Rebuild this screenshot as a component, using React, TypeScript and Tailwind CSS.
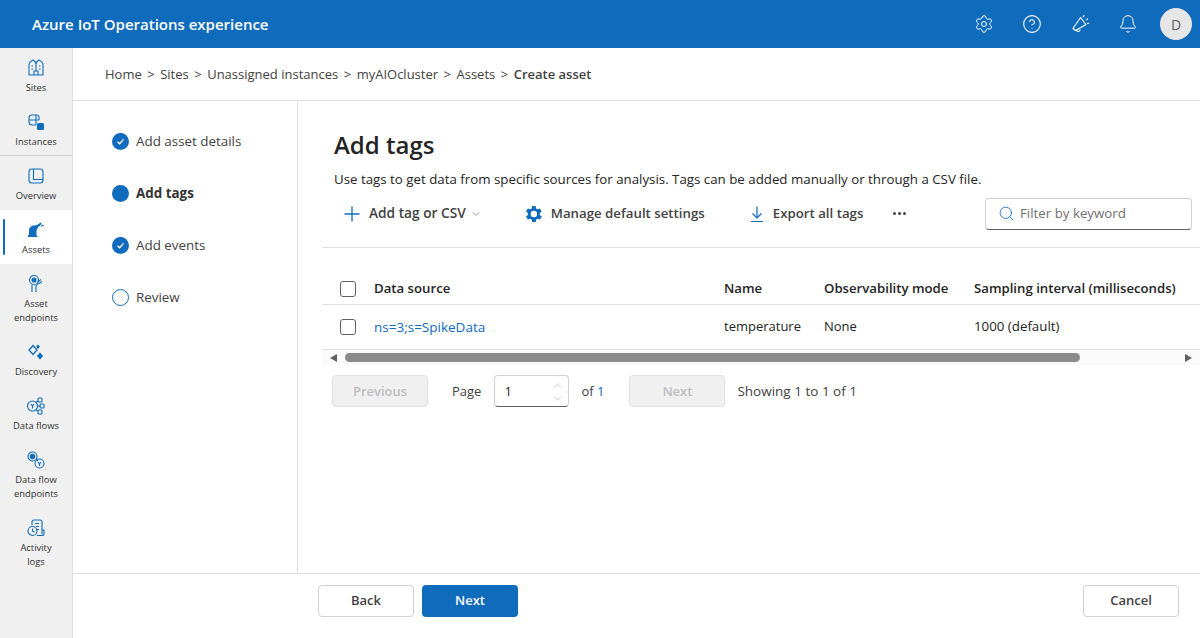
import { Bell, ChevronDown, ChevronUp, CircleHelp, Search, Settings } from "lucide-react";
import type { ReactNode } from "react";

const BLUE = "#0f6cbd";

const Ico = ({ children }: { children: ReactNode }) => (
  <svg width="20" height="20" viewBox="0 0 20 20" fill="none" stroke={BLUE} strokeWidth="1.1">
    {children}
  </svg>
);

const navItems: { label: string[]; icon: ReactNode; active?: boolean; divider?: boolean }[] = [
  {
    label: ["Sites"],
    icon: (
      <Ico>
        <path d="M3 17V7c0-2.500 3-4.500 4-5 1 .5 3 2.500 3 4.500 0-2 2-4 3-4.500 1 .5 4 2.500 4 5v10z" />
        <path d="M10 6.500V13M8 17v-4h4v4M5.500 8h1.500M5.500 11h1.500M13 8h1.500M13 11h1.500" />
      </Ico>
    ),
  },
  {
    label: ["Instances"],
    divider: true,
    icon: (
      <Ico>
        <path d="M10 3H6a3 3 0 0 0-3 3v4a3 3 0 0 0 3 3h4" />
        <path d="M10 3h1a2 2 0 0 1 2 2v3M3 8h10M10 3v10" />
        <rect x="11" y="11" width="7" height="7" rx="1.5" fill={BLUE} stroke="none" />
      </Ico>
    ),
  },
  {
    label: ["Overview"],
    icon: (
      <Ico>
        <rect x="3" y="3" width="14" height="14" rx="3" />
        <path d="M7.500 3v10.500H17" />
      </Ico>
    ),
  },
  {
    label: ["Assets"],
    active: true,
    icon: (
      <svg width="20" height="20" viewBox="0 0 20 20" fill={BLUE}>
        <path d="M2 17v-1.500l1-1V10.500C3 7.500 5.500 5.500 8 5.500c2.500 0 4.500-1.200 6.500-3l1.200 1.200c-2.200 2.400-4.700 4-5.200 6.800v5l1.500 1.200V17z" />
        <path d="M15 5.800l1.300-1.200 1.700 1.100-.6.900-1.100-.6-.8.900z" />
      </svg>
    ),
  },
  {
    label: ["Asset", "endpoints"],
    icon: (
      <Ico>
        <circle cx="8" cy="6" r="4.500" />
        <circle cx="8" cy="6" r="2" fill={BLUE} />
        <path d="M6 10.500V18M10 18v-5.500c0-1.500 1.500-2.500 3-3l3-2M11 8.500l4-3" />
      </Ico>
    ),
  },
  {
    label: ["Discovery"],
    icon: (
      <svg width="20" height="20" viewBox="0 0 20 20" fill="none" stroke={BLUE} strokeWidth="1.300">
        <path d="M7 3.500 11 8 7 12.500 3 8z" />
        <path d="M14 11.500l2.200 2.500-2.200 2.500-2.200-2.500z" fill={BLUE} />
        <path d="M12 3.500l1 1.200-1 1.200-1-1.200z" fill={BLUE} />
      </svg>
    ),
  },
  {
    label: ["Data flows"],
    icon: (
      <Ico>
        <circle cx="6.500" cy="10" r="5" />
        <path d="M5 8l1.500 2 1.500-2M6.500 10v2.500M11.500 10h3M10 6.500l2-1.500M10 13.500l2 1.500" />
        <rect x="12" y="2" width="4" height="4" rx="1" />
        <rect x="14" y="8" width="4" height="4" rx="1" />
        <rect x="12" y="14" width="4" height="4" rx="1" />
      </Ico>
    ),
  },
  {
    label: ["Data flow", "endpoints"],
    icon: (
      <Ico>
        <circle cx="6.500" cy="6.500" r="4.500" />
        <circle cx="6.500" cy="6.500" r="2.200" fill={BLUE} />
        <path d="M10 9l2 2" />
        <circle cx="13.500" cy="13.500" r="4.500" />
        <path d="M12 12l1.500 1.800 1.500-1.800M13.500 13.800V16" />
      </Ico>
    ),
  },
  {
    label: ["Activity", "logs"],
    icon: (
      <Ico>
        <path d="M6 7V4a2 2 0 0 1 2-2h6a2 2 0 0 1 2 2v12" />
        <path d="M9 5.500h4M10 8.500h3M10 11.500h3" />
        <path d="M16 12h2v3.500a2 2 0 0 1-2 2h-5" />
        <circle cx="6.500" cy="13" r="4.500" />
        <path d="M6.500 10.500V13l1.800 1.200" />
      </Ico>
    ),
  },
];

const Check = () => (
  <span className="flex h-[17px] w-[17px] items-center justify-center rounded-full bg-[#0f6cbd]">
    <svg width="9" height="9" viewBox="0 0 9 9" fill="none" stroke="white" strokeWidth="1.300">
      <path d="M1.500 4.800 3.600 6.800 7.600 2.400" />
    </svg>
  </span>
);

const steps = [
  { label: "Add asset details", state: "done" },
  { label: "Add tags", state: "current" },
  { label: "Add events", state: "done" },
  { label: "Review", state: "todo" },
];

const CheckBox = () => <span className="block h-4 w-4 rounded-[3px] border border-[#616161] bg-white" />;

const HeaderIcon = ({ children }: { children: ReactNode }) => (
  <span className="flex h-6 w-6 items-center justify-center text-white">{children}</span>
);

export default function App() {
  return (
    <div className="flex h-[638px] w-[1200px] flex-col overflow-hidden bg-white font-['Open_Sans',sans-serif] text-[13px] text-[#424242]">
      <header className="flex h-12 shrink-0 items-center bg-[#0f6cbd] pl-8 pr-2 text-white">
        <span className="flex-1 text-[15px] font-semibold">Azure IoT Operations experience</span>
        <div className="flex items-center gap-6">
          <HeaderIcon><Settings size={20} strokeWidth={1.2} /></HeaderIcon>
          <HeaderIcon><CircleHelp size={20} strokeWidth={1.3} /></HeaderIcon>
          <HeaderIcon>
            <svg width="20" height="20" viewBox="0 0 20 20" fill="none" stroke="white" strokeWidth="1.100" strokeLinejoin="round">
              <path d="M10.500 3.500 16 10.500 5.500 16.500 3 14.500z" />
              <path d="M6.500 16c.5 2 3.200 2 3.700-.6" />
              <path d="M13 3.200 14.200 1M15.800 6 18 4.600M17 9.500l2.200-.2" />
            </svg>
          </HeaderIcon>
          <HeaderIcon><Bell size={20} strokeWidth={1.2} /></HeaderIcon>
          <span className="-ml-1 flex h-8 w-8 items-center justify-center rounded-full bg-[#e6e6e6] text-[14px] text-[#5e5e5e]">D</span>
        </div>
      </header>

      <div className="flex min-h-0 flex-1">
        <nav className="w-[73px] shrink-0 border-r border-[#e0e0e0] bg-[#f0f0f0]">
          {navItems.map((item) => (
            <div
              key={item.label[0] + item.label.length}
              className={`relative flex flex-col items-center pt-2.5 ${item.active ? "bg-white" : ""} ${item.divider ? "border-b border-[#d1d1d1] pb-1.5" : "pb-[7px]"}`}
            >
              {item.active && <span className="absolute left-[3px] top-[9px] h-9 w-0.5 rounded-sm bg-[#0f6cbd]" />}
              {item.icon}
              <div className="mt-[3px] text-center text-[9.4px] leading-[14px] text-[#303030]">
                {item.label.map((l) => (
                  <div key={l}>{l}</div>
                ))}
              </div>
            </div>
          ))}
        </nav>

        <div className="flex min-w-0 flex-1 flex-col">
          <div className="flex h-[53px] shrink-0 items-center gap-[5.5px] border-b border-[#e0e0e0] pl-8 pt-0.5 text-[13px]">
            {["Home", "Sites", "Unassigned instances", "myAIOcluster", "Assets"].map((c) => (
              <span key={c} className="flex gap-[5.5px]">
                <span>{c}</span>
                <span>&gt;</span>
              </span>
            ))}
            <span className="font-semibold">Create asset</span>
          </div>

          <div className="flex min-h-0 flex-1">
            <aside className="w-[225px] shrink-0 border-r border-[#e0e0e0] pl-[39px] pt-[27px]">
              {steps.map((s) => (
                <div key={s.label} className="flex h-[52px] items-start">
                  <div className="flex h-[26px] items-center gap-[7px]">
                    {s.state === "done" && <Check />}
                    {s.state === "current" && <span className="block h-[17px] w-[17px] rounded-full bg-[#0f6cbd]" />}
                    {s.state === "todo" && <span className="block h-[17px] w-[17px] rounded-full border-[1.5px] border-[#0f6cbd]" />}
                    <span className={`text-[13.4px] ${s.state === "current" ? "font-bold text-[#333]" : ""}`}>{s.label}</span>
                  </div>
                </div>
              ))}
            </aside>

            <main className="flex min-w-0 flex-1 flex-col pl-6 pt-[27px]">
              <div className="pl-3">
                <h1 className="text-[24px] font-semibold leading-[34px] text-[#242424]">Add tags</h1>
                <p className="mt-[7px] text-[13.3px] leading-[20px] text-[#242424]">
                  Use tags to get data from specific sources for analysis. Tags can be added manually or through a CSV file.
                </p>
              </div>

              <div className="mt-2 flex h-[33px] items-center pl-[22px] pr-2 text-[13.25px] font-semibold">
                <svg width="16" height="16" viewBox="0 0 16 16" fill="none" stroke={BLUE} strokeWidth="1.300">
                  <path d="M8 .5v15M.5 8h15" />
                </svg>
                <span className="ml-[9px] text-[13.7px]">Add tag or CSV</span>
                <ChevronDown size={12} strokeWidth={1.2} color="#616161" className="ml-1" />
                <svg className="ml-[40px]" width="22" height="22" viewBox="0 0 24 24" fill={BLUE}>
                  <path fillRule="evenodd" d="M19.400 13a7.500 7.500 0 0 0 0-2l2.100-1.600-2-3.500-2.500 1a7.600 7.600 0 0 0-1.700-1L15 3.200h-4l-.4 2.700c-.6.2-1.200.6-1.700 1l-2.500-1-2 3.500L6.500 11a7.500 7.500 0 0 0 0 2l-2.100 1.600 2 3.500 2.500-1c.5.4 1.100.8 1.700 1l.4 2.700h4l.4-2.700c.6-.2 1.200-.6 1.700-1l2.500 1 2-3.500zM13 15.500a3.500 3.500 0 1 1 0-7 3.500 3.500 0 0 1 0 7z" />
                </svg>
                <span className="ml-[7px]">Manage default settings</span>
                <svg className="ml-[43px]" width="18" height="18" viewBox="0 0 18 18" fill="none" stroke={BLUE} strokeWidth="1.200">
                  <path d="M9 1.500v11.500M4.500 8.500 9 13l4.500-4.500M3 16.500h12" />
                </svg>
                <span className="ml-[7px]">Export all tags</span>
                <span className="ml-[30px] flex gap-[2px]">
                  <i className="block h-[3px] w-[3px] rounded-full bg-[#424242]" />
                  <i className="block h-[3px] w-[3px] rounded-full bg-[#424242]" />
                  <i className="block h-[3px] w-[3px] rounded-full bg-[#424242]" />
                </span>
                <div className="ml-auto flex h-8 w-[207px] items-center gap-[5px] rounded border border-[#d1d1d1] border-b-[#616161] pl-[12px] text-[13.3px] font-normal text-[#707070]">
                  <Search size={17} strokeWidth={1.2} color={BLUE} />
                  <span>Filter by keyword</span>
                </div>
              </div>

              <div className="mt-[17px] border-t border-[#e0e0e0]" />

              <div className="grid h-[57px] grid-cols-[402px_100px_150px_1fr] items-end border-b border-[#e0e0e0] pb-[5px] text-[13.2px] font-semibold text-[#242424]">
                <div className="flex items-center gap-[18px] pl-[18px]"><CheckBox /><span>Data source</span></div>
                <div>Name</div>
                <div>Observability mode</div>
                <div className="whitespace-nowrap">Sampling interval (milliseconds)</div>
              </div>
              <div className="grid h-[45px] grid-cols-[402px_100px_150px_1fr] items-center border-b border-[#e0e0e0] text-[#242424]">
                <div className="flex items-center gap-[18px] pl-[18px]"><CheckBox /><span className="text-[13.5px] text-[#0f6cbd]">ns=3;s=SpikeData</span></div>
                <div>temperature</div>
                <div>None</div>
                <div className="text-[13.3px]">1000 (default)</div>
              </div>
              <div className="flex h-[15px] items-center bg-[#fafafa] px-2">
                <span className="h-0 w-0 border-y-[4px] border-r-[7px] border-y-transparent border-r-[#616161]" />
                <span className="ml-2 h-[9px] w-[735px] rounded-full bg-[#8a8a8a]" />
                <span className="ml-auto h-0 w-0 border-y-[4px] border-l-[7px] border-y-transparent border-l-[#616161]" />
              </div>

              <div className="mt-2.5 flex items-center pl-2.5">
                <span className="flex h-8 w-[96px] items-center justify-center rounded border border-[#e0e0e0] bg-[#f0f0f0] pt-0.5 font-semibold text-[#bdbdbd]">Previous</span>
                <span className="ml-6 pt-0.5">Page</span>
                <div className="relative ml-[13px] flex h-8 w-[75px] items-center rounded border border-[#d1d1d1] border-b-[#616161] pl-[9px] pt-0.5 text-[#242424]">
                  1
                  <div className="absolute right-[4px] top-[3px] flex flex-col text-[#a0a0a0]">
                    <ChevronUp size={13} strokeWidth={1} />
                    <ChevronDown size={13} strokeWidth={1} />
                  </div>
                </div>
                <span className="ml-3 pt-0.5">of <span className="text-[#0f6cbd]">1</span></span>
                <span className="ml-[25px] flex h-8 w-[96px] items-center justify-center rounded border border-[#e0e0e0] bg-[#f0f0f0] pt-0.5 font-semibold text-[#bdbdbd]">Next</span>
                <span className="ml-3 text-[13.5px]">Showing 1 to 1 of 1</span>
              </div>
            </main>
          </div>

          <footer className="flex h-[65px] shrink-0 items-start border-t border-[#e0e0e0] pl-[245px] pr-[21px] pt-[11px]">
            <span className="flex h-8 w-[96px] items-center justify-center rounded border border-[#d1d1d1] font-semibold">Back</span>
            <span className="ml-2 flex h-8 w-[96px] items-center justify-center rounded bg-[#0f6cbd] font-semibold text-white">Next</span>
            <span className="ml-auto flex h-8 w-[96px] items-center justify-center rounded border border-[#d1d1d1] font-semibold">Cancel</span>
          </footer>
        </div>
      </div>
    </div>
  );
}
